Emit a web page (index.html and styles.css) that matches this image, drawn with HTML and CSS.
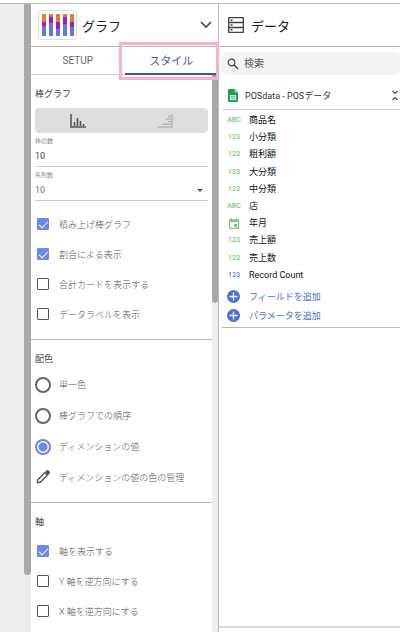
FILE: index.html
```html
<!DOCTYPE html>
<html lang="ja">
<head>
    <meta charset="UTF-8">
    <meta name="viewport" content="width=device-width, initial-scale=1.0">
    <title>グラフ</title>
    <link rel="stylesheet" href="styles.css">
</head>
<body>
    <div class="app">
        <div class="gutter">
            <div class="gutter-thumb"></div>
        </div>

        <section class="style-panel">
            <header class="panel-header">
                <span class="chart-icon">
                    <svg width="32" height="24" viewBox="0 0 32 24">
                        <path fill="#e08033" d="M0 1h4v9H0zM7 1h4v4H7zM14 1h4v9h-4zM21 1h4v3h-4zM28 1h4v8h-4z"/>
                        <path fill="#a716c4" d="M0 9h4v4H0zM7 4h4v6H7zM14 9h4v7h-4zM21 4h4v7h-4zM28 9h4v5h-4z"/>
                        <path fill="#6478e0" d="M0 13h4v10H0zM7 10h4v13H7zM14 16h4v7h-4zM21 11h4v12h-4zM28 14h4v9h-4z"/>
                    </svg>
                </span>
                <h1>グラフ</h1>
                <button class="icon-btn" type="button" aria-label="グラフの種類">
                    <svg width="12" height="8" viewBox="0 0 12 8"><path d="M1 1l5 5 5-5" fill="none" stroke="#444" stroke-width="1.6"/></svg>
                </button>
            </header>

            <nav class="tabs">
                <button class="tab" type="button">SETUP</button>
                <button class="tab ativo" type="button">スタイル</button>
            </nav>

            <div class="scroll-area">
                <form class="options">
                    <fieldset class="group">
                        <h2>棒グラフ</h2>
                        <div class="toggle">
                            <button type="button" aria-label="縦棒">
                                <svg width="16" height="16" viewBox="0 0 16 16"><path d="M1 1v13H16M4.500 13V9M7.500 13V5M10.500 13V8M13.500 13V11" fill="none" stroke="#555" stroke-width="1.600"/></svg>
                            </button>
                            <button type="button" aria-label="横棒">
                                <svg width="16" height="16" viewBox="0 0 16 16"><path d="M15 1v13H1M14 3.500H11M14 6H8.500M14 8.500H11M14 11.200H5" fill="none" stroke="#b8b8b8" stroke-width="1.600"/></svg>
                            </button>
                        </div>
                        <div class="field">
                            <label for="barras">棒の数</label>
                            <input type="text" id="barras" value="10">
                        </div>
                        <div class="field field-select">
                            <label for="series">系列数</label>
                            <select id="series">
                                <option>10</option>
                            </select>
                            <svg class="caret" width="6" height="3" viewBox="0 0 6 3"><path d="M0 0h6L3 3z" fill="#555"/></svg>
                        </div>
                        <div class="checks">
                            <label class="option"><input type="checkbox" checked>積み上げ棒グラフ</label>
                            <label class="option"><input type="checkbox" checked>割合による表示</label>
                            <label class="option"><input type="checkbox">合計カードを表示する</label>
                            <label class="option"><input type="checkbox">データラベルを表示</label>
                        </div>
                    </fieldset>

                    <fieldset class="group">
                        <h2>配色</h2>
                        <label class="option option-radio"><input type="radio" name="cor">単一色</label>
                        <label class="option option-radio"><input type="radio" name="cor">棒グラフでの順序</label>
                        <label class="option option-radio"><input type="radio" name="cor" checked>ディメンションの値</label>
                        <button class="option" type="button">
                            <svg width="16" height="16" viewBox="0 0 16 16"><path d="M2.500 13.500v-2.500l7.500-7.500 2.500 2.500-7.500 7.500z" fill="none" stroke="#555" stroke-width="1.500"/><path d="M10 3l1.800-1.800q.7-.6 1.400 0l1.600 1.600q.6.700 0 1.400L13 6z" fill="#555"/></svg>
                            ディメンションの値の色の管理
                        </button>
                    </fieldset>

                    <fieldset class="group">
                        <h2>軸</h2>
                        <div class="axis">
                            <label class="option"><input type="checkbox" checked>軸を表示する</label>
                            <label class="option"><input type="checkbox">Y 軸を逆方向にする</label>
                            <label class="option"><input type="checkbox">X 軸を逆方向にする</label>
                        </div>
                    </fieldset>
                </form>
                <div class="scroll-track">
                    <div class="scroll-thumb"></div>
                </div>
            </div>
        </section>

        <section class="data-panel">
            <header class="panel-header data-header">
                <svg width="16" height="16" viewBox="0 0 16 16"><path d="M.7.700h14.600v14.600H.7zM.7 5.500h14.600M.7 10.500h14.600" fill="none" stroke="#444" stroke-width="1.300"/><path d="M2.500 2.500h2v1.500h-2zM2.500 7.200h2v1.500h-2zM2.500 12h2v1.500h-2z" fill="#444"/></svg>
                <h1>データ</h1>
            </header>

            <div class="data-body">
                <label class="search">
                    <svg width="12" height="12" viewBox="0 0 12 12"><circle cx="4.500" cy="4.500" r="3.300" fill="none" stroke="#444" stroke-width="1.200"/><path d="M7 7l4 4" stroke="#444" stroke-width="1.400"/></svg>
                    <input type="search" placeholder="検索" aria-label="検索">
                </label>

                <div class="source">
                    <svg width="10" height="13" viewBox="0 0 10 13"><path d="M1 0h5.500L10 3.500V12q0 1-1 1H1q-1 0-1-1V1q0-1 1-1z" fill="#249c55"/><path d="M6.500 0L10 3.500H6.500z" fill="#8cd0a8"/><path d="M2 6h6v5H2z" fill="#e4f5ea"/><path d="M3 7.700h4M3 9.400h4" stroke="#249c55" stroke-width=".7"/></svg>
                    <span>POSdata - POSデータ</span>
                    <button class="icon-btn" type="button" aria-label="折りたたむ">
                        <svg width="6" height="11" viewBox="0 0 6 11"><path d="M.5 1L3 3.500 5.500 1M.5 10L3 7.500 5.500 10" fill="none" stroke="#444" stroke-width="1.100"/></svg>
                    </button>
                </div>

                <ul class="fields">
                    <li><span class="type">ABC</span>商品名</li>
                    <li><span class="type">123</span>小分類</li>
                    <li><span class="type">123</span>粗利額</li>
                    <li><span class="type">123</span>大分類</li>
                    <li><span class="type">123</span>中分類</li>
                    <li><span class="type">ABC</span>店</li>
                    <li>
                        <span class="type"><svg width="10" height="11" viewBox="0 0 10 11"><path d="M.6 2h8.800v8.400H.6z" fill="none" stroke="#81c784" stroke-width="1.200"/><path d="M0 1.500h10V4H0zM2 0h1v2H2zM7 0h1v2H7zM5 6h3v3H5z" fill="#81c784"/></svg></span>年月
                    </li>
                    <li><span class="type">123</span>売上額</li>
                    <li><span class="type">123</span>売上数</li>
                    <li><span class="type type-metric">123</span>Record Count</li>
                </ul>

                <div class="actions">
                    <button type="button">
                        <svg width="13" height="13" viewBox="0 0 13 13"><circle cx="6.500" cy="6.500" r="6.500" fill="#4a6ee0"/><path d="M6.500 2.500v8M2.500 6.500h8" stroke="#fff" stroke-width="1.300"/></svg>
                        フィールドを追加
                    </button>
                    <button type="button">
                        <svg width="13" height="13" viewBox="0 0 13 13"><circle cx="6.500" cy="6.500" r="6.500" fill="#4a6ee0"/><path d="M6.500 2.500v8M2.500 6.500h8" stroke="#fff" stroke-width="1.300"/></svg>
                        パラメータを追加
                    </button>
                </div>
            </div>
            <div class="data-footer"></div>
        </section>
    </div>
</body>
</html>
```
FILE: styles.css
```css
* {
    box-sizing: border-box;
}

body {
    margin: 0;
    padding-top: 3px;
    height: 100vh;
    overflow: hidden;
    background-color: #fff;
    color: #444;
    font-family: Roboto, "Noto Sans CJK JP", sans-serif;
    font-size: 9px;
}

button,
input,
select {
    margin: 0;
    padding: 0;
    border: none;
    background: none;
    color: inherit;
    font: inherit;
}

button {
    cursor: pointer;
}

svg {
    display: block;
    flex-shrink: 0;
}

h1,
h2 {
    margin: 0;
    font-weight: normal;
}

h1 {
    font-size: 13px;
    color: #222;
}

h2 {
    font-size: 9px;
    line-height: 19px;
}

.app {
    display: flex;
    height: 100%;
    border-top: 1px solid #bbb;
}

/* barra de rolagem da página */
.gutter {
    display: flex;
    justify-content: flex-end;
    width: 31px;
    flex-shrink: 0;
    background-color: #ededed;
}

.gutter-thumb {
    width: 7px;
    height: 91%;
    border-radius: 0 0 4px 4px;
    background-color: #a8a8a8;
}

.style-panel {
    display: flex;
    flex-direction: column;
    width: 47%;
    border-right: 1px solid #bbb;
}

.panel-header {
    display: flex;
    align-items: center;
    flex-shrink: 0;
    gap: 5px;
    height: 43px;
    padding: 0 6px 0 7px;
    border-bottom: 1px solid #bbb;
}

.chart-icon {
    display: flex;
    align-items: center;
    justify-content: center;
    width: 39px;
    height: 30px;
    border: 1px solid #dadce0;
    border-radius: 4px;
}

.icon-btn {
    margin-left: auto;
}

.tabs {
    display: flex;
    flex-shrink: 0;
    height: 28px;
    border-bottom: 1px solid #ccc;
}

.tab {
    flex: 1;
    font-size: 10px;
    color: #666;
}

.tab.ativo {
    position: relative;
    height: 28px;
    border-bottom: 2px solid #3f4fa8;
    font-size: 11px;
    color: #4a50b8;
}

/* destaque em volta da aba */
.tab.ativo::after {
    content: "";
    position: absolute;
    z-index: 2;
    top: -5px;
    right: -1px;
    bottom: -7px;
    left: -6px;
    border: 3px solid #f8b0cc;
}

.scroll-area {
    display: flex;
    flex: 1;
    min-height: 0;
}

.options {
    flex: 1;
    overflow: hidden;
}

.scroll-track {
    width: 6px;
    background-color: #ededed;
}

.scroll-thumb {
    height: 41%;
    border-radius: 0 0 3px 3px;
    background-color: #a8a8a8;
}

.group {
    min-width: 0;
    margin: 0;
    padding: 10px 4px;
    border: none;
    border-bottom: 1px solid #bbb;
}

.group:last-child {
    border-bottom: none;
}

.toggle {
    display: flex;
    height: 25px;
    margin-top: 4px;
    border-radius: 4px;
    background-color: #dedede;
}

.toggle button {
    display: flex;
    flex: 1;
    align-items: center;
    justify-content: center;
}

.field {
    position: relative;
    display: flex;
    flex-direction: column;
    margin-top: 4px;
}

.field label {
    font-size: 6px;
    line-height: 8px;
    color: #888;
}

.field input,
.field select {
    width: 100%;
    height: 22px;
    border-bottom: 1px solid #ccc;
    border-radius: 0;
    appearance: none;
}

.field select {
    color: #777;
}

.caret {
    position: absolute;
    right: 5px;
    bottom: 9px;
}

.checks {
    margin-top: 8px;
}

.axis {
    margin-top: 4px;
}

.option {
    display: flex;
    align-items: center;
    gap: 8px;
    height: 30px;
    color: #555;
    font-weight: 300;
    white-space: nowrap;
}

.option-radio {
    height: 31px;
}

.option input {
    position: relative;
    flex-shrink: 0;
    appearance: none;
}

.option input[type="checkbox"] {
    width: 12px;
    height: 12px;
    margin: 0 2px;
    border: 1px solid #555;
    border-radius: 1px;
}

.option input[type="checkbox"]:checked {
    border-color: #6b87f0;
    background-color: #6b87f0;
}

.option input[type="checkbox"]:checked::after {
    content: "";
    position: absolute;
    top: 2px;
    left: 1px;
    width: 8px;
    height: 4px;
    border-bottom: 1px solid #fff;
    border-left: 1px solid #fff;
    transform: rotate(-45deg);
}

.option input[type="radio"] {
    width: 16px;
    height: 16px;
    border: 2px solid #666;
    border-radius: 50%;
}

.option input[type="radio"]:checked {
    border-color: #6b87f0;
    background: radial-gradient(circle, #6b87f0 4px, #fff 5px);
}

.data-panel {
    display: flex;
    flex: 1;
    flex-direction: column;
    min-width: 0;
}

.data-header {
    gap: 7px;
    padding-left: 9px;
}

.data-body {
    flex: 1;
    padding: 5px 0 0 3px;
}

.search {
    display: flex;
    align-items: center;
    gap: 5px;
    height: 23px;
    padding-left: 5px;
    border-radius: 6px;
    background-color: #f1f3f4;
}

.search input {
    flex: 1;
    min-width: 0;
    font-size: 10px;
    appearance: none;
}

.search input::placeholder {
    color: #555;
    opacity: 1;
}

.source {
    display: flex;
    align-items: center;
    gap: 7px;
    height: 35px;
    padding: 7px 2px 0 6px;
    border-bottom: 1px solid #ccc;
    color: #333;
}

.fields {
    display: grid;
    grid-auto-rows: 1fr;
    height: 174px;
    margin: 0;
    padding: 2px 0 0 6px;
    list-style: none;
    color: #111;
}

.fields li {
    display: flex;
    align-items: center;
    gap: 9px;
    line-height: 17px;
}

.type {
    display: flex;
    justify-content: center;
    width: 12px;
    color: #81c784;
    font-size: 7px;
    font-weight: 500;
}

.type-metric {
    color: #5b7be8;
}

.actions {
    padding: 3px 0 2px 5px;
    border-bottom: 1px solid #bbb;
    color: #4a6ee0;
}

.actions button {
    display: flex;
    align-items: center;
    gap: 9px;
    height: 19px;
}

.data-footer {
    height: 6px;
    border-top: 2px solid #d8d8d8;
}
```
